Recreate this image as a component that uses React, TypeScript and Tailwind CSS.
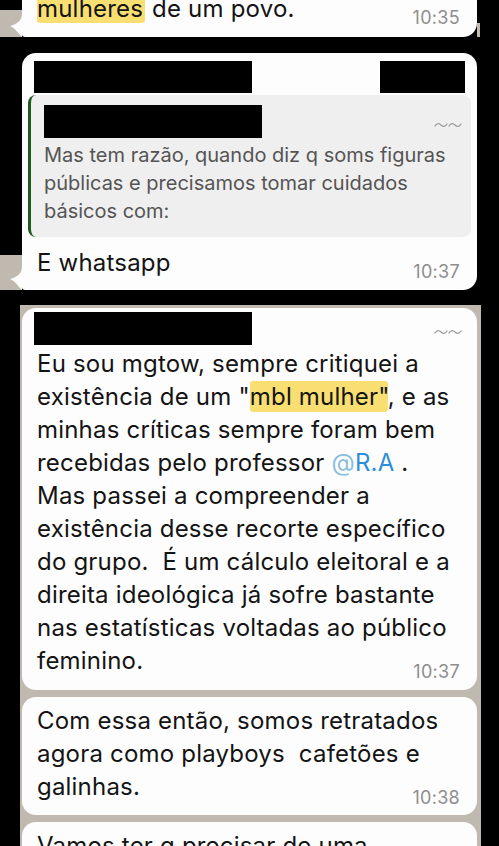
const wall = "bg-[#bfb9af]"

function Tail() {
  return (
    <svg width="14" height="24" viewBox="0 0 14 24" className="block">
      <path d="M14 0 C14 7 10 11 2 13 C7 15 10 20 14 24 Z" fill="#fdfdfd" />
    </svg>
  )
}

function Time({ t, drop }: { t: string; drop: string }) {
  return (
    <span className={`shrink-0 text-[18px] leading-[20px] tracking-[0.3px] text-[#8e8e8e] ${drop}`}>
      {t}
    </span>
  )
}

function Tilde() {
  return (
    <svg width="28" height="8" viewBox="0 0 28 8" className="block">
      <path
        d="M1 5 C3 2 5 2 7 4 C9 6 11 6 13 3 M15 5 C17 2 19 2 21 4 C23 6 25 6 27 3"
        fill="none"
        stroke="#9c9c9c"
        strokeWidth="1.3"
        strokeLinecap="round"
      />
    </svg>
  )
}

export default function App() {
  return (
    <div className="w-[499px] h-[846px] overflow-hidden bg-black font-['Inter','Liberation_Sans',sans-serif] text-[#141414]">
      {/* bubble 1 */}
      <div className="flex -mt-[16px]">
        <div className="w-[22px] flex flex-col">
          <div className="flex-1" />
          <div className={`h-[27px] ${wall} flex items-end justify-end`}>
            <Tail />
          </div>
        </div>
        <div className="w-[455px] bg-[#fdfdfd] rounded-[14px] rounded-bl-[3px] pt-[8px] pb-[12px] pl-[15px] pr-[17px]">
          <div className="flex items-end justify-between">
            <span className="text-[24px] leading-[33px] tracking-[0.2px] whitespace-nowrap">
              <span className="bg-[#f9df72] rounded-[3px] pr-[2px]">mulheres</span> de um povo.
            </span>
            <Time t="10:35" drop="-mb-[3px]" />
          </div>
        </div>
        <div className="w-[3px] flex flex-col">
          <div className="flex-1" />
          <div className={`h-[14px] ${wall}`} />
        </div>
      </div>

      {/* bubble 2 */}
      <div className="flex mt-[16px]">
        <div className="w-[22px] flex flex-col">
          <div className="flex-1" />
          <div className={`h-[35px] ${wall} flex items-end justify-end`}>
            <Tail />
          </div>
        </div>
        <div className="w-[455px] h-[237px] bg-[#fdfdfd] rounded-[14px] rounded-bl-[3px] pt-[8px] pb-[11px]">
          <div className="flex px-[12px]">
            <div className="w-[218px] h-[32px] bg-black" />
            <div className="ml-auto w-[85px] h-[32px] bg-black" />
          </div>
          <div className="mt-[2px] ml-[6px] mr-[6px] h-[142px] bg-[#efefef] rounded-[8px] border-l-[3px] border-[#1f5a1f] pt-[10px] pl-[13px] pr-[9px]">
            <div className="flex items-center justify-between">
              <div className="w-[218px] h-[33px] bg-black" />
              <div className="mt-[6px]">
                <Tilde />
              </div>
            </div>
            <div className="mt-[3px] text-[20px] leading-[28px] text-[#545454] whitespace-nowrap">
              <div>Mas tem razão, quando diz q soms figuras</div>
              <div>públicas e precisamos tomar cuidados</div>
              <div>básicos com:</div>
            </div>
          </div>
          <div className="mt-[9px] pl-[15px] pr-[17px] flex items-end justify-between">
            <span className="text-[24px] leading-[33px] tracking-[0.2px]">E whatsapp</span>
            <Time t="10:37" drop="-mb-[3px]" />
          </div>
        </div>
      </div>

      {/* bubbles 3-5 over wallpaper */}
      <div className={`mt-[15px] ml-[20px] w-[461px] h-[600px] ${wall} pt-[3px] pl-[2px] flex flex-col gap-[7px]`}>
        <div className="w-[455px] bg-[#fdfdfd] rounded-[14px] pt-[4px] pb-[13px]">
          <div className="flex items-center justify-between pl-[12px] pr-[15px]">
            <div className="w-[218px] h-[33px] bg-black" />
            <div className="mt-[6px]">
              <Tilde />
            </div>
          </div>
          <div className="mt-[2px] pl-[15px] pr-[17px] text-[24px] leading-[33px] tracking-[0.2px] whitespace-nowrap">
            <div>Eu sou mgtow, sempre critiquei a</div>
            <div>
              existência de um "<span className="bg-[#f9df72] rounded-[3px] py-[1px]">mbl mulher"</span>, e as
            </div>
            <div>minhas críticas sempre foram bem</div>
            <div>
              recebidas pelo professor <span className="text-[#8bbde3]">@</span>
              <span className="text-[#2c8fd8]">R.A</span> .
            </div>
            <div>Mas passei a compreender a</div>
            <div>existência desse recorte específico</div>
            <div>do grupo.&nbsp; É um cálculo eleitoral e a</div>
            <div>direita ideológica já sofre bastante</div>
            <div>nas estatísticas voltadas ao público</div>
            <div className="flex items-end justify-between">
              <span>feminino.</span>
              <Time t="10:37" drop="-mb-[5px]" />
            </div>
          </div>
        </div>

        <div className="w-[455px] bg-[#fdfdfd] rounded-[14px] pt-[7px] pb-[12px] pl-[15px] pr-[17px] text-[24px] leading-[33px] tracking-[0.2px] whitespace-nowrap">
          <div>Com essa então, somos retratados</div>
          <div>agora como playboys&nbsp; cafetões e</div>
          <div className="flex items-end justify-between">
            <span>galinhas.</span>
            <Time t="10:38" drop="-mb-[5px]" />
          </div>
        </div>

        <div className="w-[455px] bg-[#fdfdfd] rounded-[14px] pt-[7px] pb-[12px] px-[15px] text-[24px] leading-[33px] tracking-[0.2px] whitespace-nowrap">
          <div>Vamos ter q precisar de uma</div>
        </div>
      </div>
    </div>
  )
}
